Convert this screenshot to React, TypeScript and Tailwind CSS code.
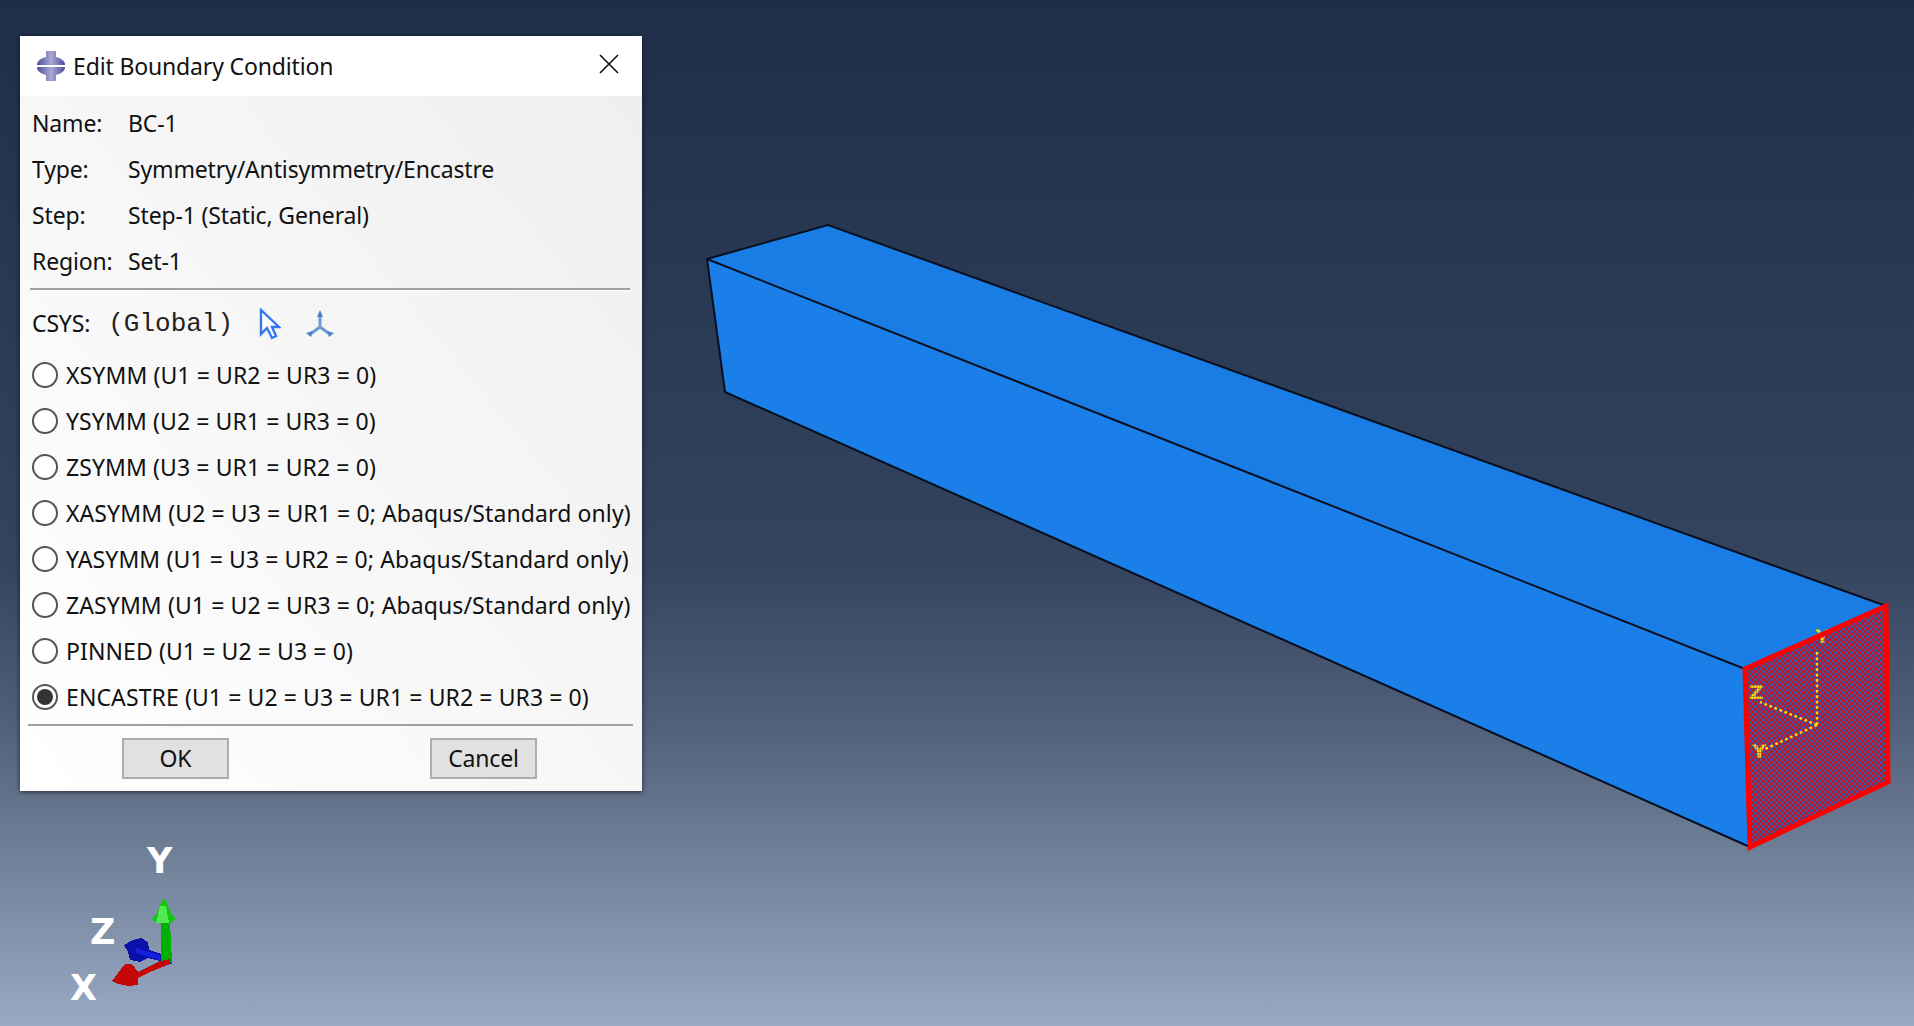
const fields = [
  ["Name:", "BC-1"],
  ["Type:", "Symmetry/Antisymmetry/Encastre"],
  ["Step:", "Step-1 (Static, General)"],
  ["Region:", "Set-1"],
];

const options = [
  "XSYMM (U1 = UR2 = UR3 = 0)",
  "YSYMM (U2 = UR1 = UR3 = 0)",
  "ZSYMM (U3 = UR1 = UR2 = 0)",
  "XASYMM (U2 = U3 = UR1 = 0; Abaqus/Standard only)",
  "YASYMM (U1 = U3 = UR2 = 0; Abaqus/Standard only)",
  "ZASYMM (U1 = U2 = UR3 = 0; Abaqus/Standard only)",
  "PINNED (U1 = U2 = U3 = 0)",
  "ENCASTRE (U1 = U2 = U3 = UR1 = UR2 = UR3 = 0)",
];

function Viewport() {
  return (
    <svg className="absolute inset-0" width={1914} height={1026} viewBox="0 0 1914 1026">
      <defs>
        <pattern id="mesh" width="5.34" height="5.34" patternUnits="userSpaceOnUse">
          <rect width="5.34" height="5.34" fill="#2a5cb0" />
          <rect width="2.67" height="2.67" fill="#dc0a10" />
          <rect x="2.67" y="2.67" width="2.67" height="2.67" fill="#dc0a10" />
        </pattern>
        <pattern id="dots" width="2.67" height="2.67" patternUnits="userSpaceOnUse">
          <rect width="2.2" height="2.2" fill="#ffee00" />
        </pattern>
      </defs>
      {/* beam */}
      <polygon points="707,259 828,225 1886,606 1745,669" fill="#1a7de6" />
      <polygon points="707,259 1745,669 1750,847 725,392" fill="#1a7fe8" />
      <g stroke="#07101f" strokeWidth="2" fill="none">
        <polyline points="725,392 707,259 828,225 1886,606" />
        <line x1="707" y1="259" x2="1745" y2="669" />
        <line x1="725" y1="392" x2="1750" y2="847" />
      </g>
      <polygon points="1745,669 1886,606 1888,782 1750,847" fill="url(#mesh)" />
      {/* csys on the fixed face */}
      <g stroke="#ffe000" strokeWidth="2.4" strokeDasharray="2.7 2.7" fill="none">
        <line x1="1817" y1="725" x2="1817" y2="650" />
        <line x1="1817" y1="725" x2="1760" y2="702" />
        <line x1="1817" y1="725" x2="1763" y2="750" />
      </g>
      <g className="font-['DejaVu_Sans'] font-bold text-[20px]" fill="url(#dots)">
        <text x="1749" y="699">Z</text>
        <text x="1752" y="758">Y</text>
        <text x="1815" y="643">Y</text>
      </g>
      <polygon points="1745,669 1886,606 1888,782 1750,847" fill="none" stroke="#ff0000" strokeWidth="5" />
      {/* view triad */}
      <g className="font-['DejaVu_Sans'] font-bold text-[35px]" fill="#ffffff">
        <text x="147" y="873">Y</text>
        <text x="90" y="944">Z</text>
        <text x="70" y="1000">X</text>
      </g>
      <g shapeRendering="crispEdges">
        <polygon points="124,945 133,940 141,938 148,942 149,950 168,956 172,964 148,958 140,962 130,960 128,952" fill="#0a10a8" />
        <polygon points="136,948 160,955 160,960 136,953" fill="#1420e0" />
        <polygon points="161,923 170,923 172,962 161,962" fill="#00b000" />
        <polygon points="163,898 167,903 172,915 176,919 171,923 157,923 152,919 157,913" fill="#16c516" />
        <polygon points="160,906 166,906 169,923 156,923" fill="#4fea4f" />
        <polygon points="112,981 118,973 125,964 132,964 138,972 160,961 170,959 170,964 150,972 138,978 138,985 128,986 118,984" fill="#c40808" />
      </g>
    </svg>
  );
}

function TitleIcon() {
  return (
    <svg width={28} height={30} viewBox="0 0 28 30">
      <defs>
        <linearGradient id="ico" x1="0" x2="1" y1="0" y2="0">
          <stop offset="0" stopColor="#4c4c9e" />
          <stop offset="0.5" stopColor="#a9a9d2" />
          <stop offset="1" stopColor="#4c4c9e" />
        </linearGradient>
      </defs>
      <path d="M9 0H19V6A14 8 0 0 1 28 14H0A14 8 0 0 1 9 6Z M0 16H28A14 8 0 0 1 19 24V30H9V24A14 8 0 0 1 0 16Z" fill="url(#ico)" />
    </svg>
  );
}

function App() {
  return (
    <div className="relative w-[1914px] h-[1026px] overflow-hidden pl-[20px] pt-[36px] bg-[linear-gradient(to_bottom,#1e2e48_0%,#34445e_55%,#4f5f79_70%,#75849d_85%,#9aa9c3_100%)] font-['Noto_Sans',sans-serif] text-[23px] tracking-[-0.15px] text-[#111]">
      <Viewport />
      <div className="relative w-[622px] h-[755px] flex flex-col bg-linear-to-tr from-[#ffffff] to-[#eeeeee] shadow-[0_1px_5px_rgba(0,0,0,0.6)]">
        <div className="h-[60px] shrink-0 bg-white flex items-center pl-[17px] pr-[23px]">
          <TitleIcon />
          <span className="ml-[8px] flex-1">Edit Boundary Condition</span>
          <svg width={20} height={20} viewBox="0 0 20 20" className="mb-[4px]">
            <path d="M1 1L19 19M19 1L1 19" stroke="#111" strokeWidth="1.6" fill="none" />
          </svg>
        </div>
        <div className="pt-[4px] pl-[12px]">
          {fields.map(([label, value]) => (
            <div key={label} className="h-[46px] flex items-center">
              <span className="w-[96px]">{label}</span>
              <span>{value}</span>
            </div>
          ))}
        </div>
        <div className="mt-[4px] ml-[10px] mr-[12px] h-[3px] border-t-2 border-[#a0a0a0] border-b border-b-white" />
        <div className="h-[61px] flex items-center pl-[12px] pt-[4px]">
          <span>CSYS:</span>
          <span className="ml-[18px] pt-[2px] font-['Liberation_Mono',monospace] text-[26px] tracking-normal text-[#222]">(Global)</span>
          <svg width={22} height={32} viewBox="0 0 22 32" className="ml-[26px]">
            <path d="M2 2V26L8 20L13 30L17 28L13 19H20Z" fill="#ffffff" stroke="#3478f0" strokeWidth="2.4" />
          </svg>
          <svg width={30} height={28} viewBox="0 0 30 28" className="ml-[24px]">
            <path d="M15 3V17M15 17L4 25M15 17L26 25" stroke="#6f9bd0" strokeWidth="3" fill="none" />
            <path d="M12 7L15 0L18 7Z M1 23L8 21L6 27Z M29 23L22 21L24 27Z" fill="#4c84c4" />
          </svg>
        </div>
        <div className="pl-[12px]">
          {options.map((option, i) => (
            <div key={option} className="h-[46px] flex items-center">
              <span className="w-[26px] h-[26px] rounded-full border-2 border-[#555] bg-white flex items-center justify-center">
                {i === 7 && <span className="w-[16px] h-[16px] rounded-full bg-[#333]" />}
              </span>
              <span className="ml-[8px] whitespace-nowrap tracking-[0.1px]">{option}</span>
            </div>
          ))}
        </div>
        <div className="mt-[4px] ml-[8px] mr-[9px] h-[2px] bg-[#a0a0a0]" />
        <div className="mt-[12px] flex pl-[102px] gap-[201px]">
          <button className="w-[107px] h-[41px] bg-[#e1e1e1] border-2 border-[#adadad] text-center">OK</button>
          <button className="w-[107px] h-[41px] bg-[#e1e1e1] border-2 border-[#adadad] text-center">Cancel</button>
        </div>
      </div>
    </div>
  );
}

export default App;
